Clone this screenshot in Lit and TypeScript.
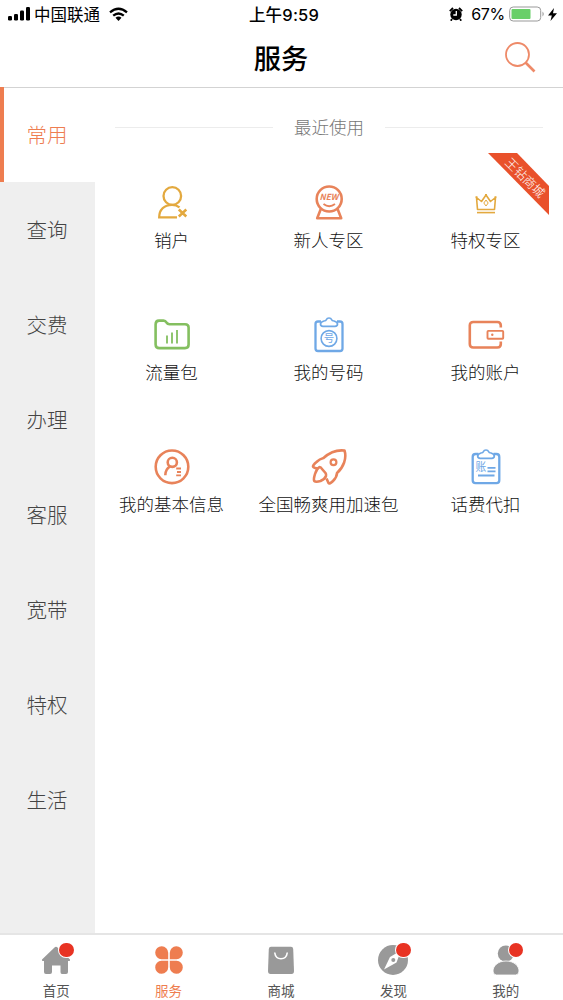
import { LitElement, html, css, svg } from "lit";
import { customElement, state } from "lit/decorators.js";

const O = "#e8835a", Y = "#e3a93f", G = "#84bf60", B = "#6fa8e6";

const icons: Record<string, any> = {
  cancel: svg`<g fill="none" stroke=${Y} stroke-width="2.300"><circle cx="20.300" cy="13" r="8.800"/><path d="M25 34.300H7.200C7.200 27 12 21.800 20 21.800Q24.500 21.800 27.500 24.300"/><path d="M26.800 26.500L34.300 33.500M34.300 26.500L26.800 33.500" stroke-width="2.500"/></g>`,
  newbie: svg`<g fill="none" stroke=${O} stroke-width="2.600" stroke-linejoin="round"><circle cx="20.200" cy="16" r="12.500"/><path d="M11.800 26L8.200 35.200H32.200L28.600 26"/><path d="M14.500 21Q20.200 25.500 26 21" stroke-width="1.800"/></g><text x="20" y="17" text-anchor="middle" font-size="8.300" font-weight="700" font-style="italic" fill=${O}>NEW</text>`,
  crown: svg`<g fill="none" stroke=${Y} stroke-width="1.600" stroke-linejoin="round"><path d="M11.500 26.500L10.500 14.500L15.500 18.500L20 12L24.500 18.500L29.500 14.500L28.500 26.500Z"/><path d="M20 17l2.200 3L20 23l-2.200-3z" stroke-width="1"/><path d="M11 29.600H29"/><path d="M19 11.800h2M9.500 14h2M28.500 14h2"/></g>`,
  folder: svg`<g fill="none" stroke=${G} stroke-width="2.600" stroke-linejoin="round"><path d="M3.600 9.500Q3.600 5.600 7 5.600H11.500Q13.500 5.600 14.500 7.500Q15.500 9.300 17.500 9.300H33Q36.600 9.300 36.600 12.500V29.500Q36.600 33.100 33 33.100H7.300Q3.600 33.100 3.600 29.500Z"/><path d="M15 20.500v8M20 17.500v11M25 15v13.500" stroke-width="1.800"/></g>`,
  number: svg`<g fill="none" stroke=${B} stroke-width="2.300" stroke-linejoin="round"><path d="M12 6.500H9Q6.500 6.500 6.500 9V33.500Q6.500 36 9 36H31Q33.500 36 33.500 33.500V9Q33.500 6.500 31 6.500H28"/><path d="M15 6Q17 6 17.500 4.500Q18 3 20 3T22.500 4.500Q23 6 25 6Q28.500 7 28.500 9Q28.500 11.300 26 11.300H14Q11.500 11.300 11.500 9Q11.500 7 15 6Z" stroke-width="1.700"/><circle cx="20" cy="23.500" r="7.900" stroke-width="1.600"/></g><text x="20" y="27.400" text-anchor="middle" font-size="10.500" font-weight="400" fill=${B}>号</text>`,
  wallet: svg`<g fill="none" stroke=${O} stroke-width="2.600"><path d="M34.800 12.500V10.500Q34.800 7 31.300 7H7.300Q3.800 7 3.800 10.500V29Q3.800 32.500 7.300 32.500H31.300Q34.800 32.500 34.800 29V26.500"/><rect x="21.500" y="15.900" width="15.700" height="7.900" rx=".8" stroke-width="1.900"/></g><circle cx="26.300" cy="19.800" r="1.200" fill=${O}/>`,
  info: svg`<g fill="none" stroke=${O} stroke-width="2.600"><circle cx="20" cy="19.800" r="16.300"/><circle cx="20.300" cy="15.300" r="4.600"/><path d="M13.300 28.300Q13.300 22.300 18 19.300"/><path d="M24.200 21.500H29M25 25H29M24.200 28.300H29" stroke-width="1.800"/></g>`,
  rocket: svg`<g fill="none" stroke=${O} stroke-width="2.600" stroke-linejoin="round"><path d="M9 21.500Q4.500 21 4 19.500Q4 18 7.500 15C10 12.500 12.500 11.500 14.500 11C20 6 27 2.500 35.500 3.500C38 11 34.500 20.500 28 26Q28 30 24 34Q20.500 37.500 19.500 36L17.500 31.500"/><path d="M10.500 20Q7.500 22 6 27Q4.300 32.500 5.300 34Q6.800 35.500 11.500 34Q16 32 17 29Q17.500 27.500 16.500 26L13 22Q12 20 10.500 20Z"/><circle cx="24.500" cy="15.200" r="2.900" stroke-width="2.200"/></g>`,
  bill: svg`<g fill="none" stroke=${B} stroke-width="2.300" stroke-linejoin="round"><path d="M12.500 7H9.500Q6.700 7 6.700 10V33.300Q6.700 36.200 9.500 36.200H30.500Q33.300 36.200 33.300 33.300V10Q33.300 7 30.500 7H27.500"/><path d="M15 6Q17 6 17.500 4.500Q18 3 20 3T22.500 4.500Q23 6 25 6Q28.300 7 28.300 9Q28.300 11.300 25.800 11.300H14.200Q11.700 11.300 11.700 9Q11.700 7 15 6Z" stroke-width="1.700"/><path d="M21.500 20.800h8M21.500 24.300h8M12 28.500h16.500" stroke-width="1.800"/></g><text x="9.600" y="24" font-size="10.800" font-weight="400" fill=${B}>账</text>`,
  home: svg`<path fill="#999" d="M2 16.500L14.500 4.500Q16 3.200 17.500 4.500L30 16.500Q30.500 18 29 18H28V29Q28 31 26 31H22Q20.500 31 20.500 29V22.500H12V29Q12 31 10 31H6Q4 31 4 29V18H3Q1.500 18 2 16.500Z"/>`,
  services: svg`<g fill="#ee7d50"><path d="M15.200 16.200H8.500A6.500 6.500 0 1 1 15.200 9.700Z"/><path d="M16.800 16.200H23.500A6.500 6.500 0 1 0 16.800 9.700Z"/><path d="M15.200 17.800H8.500A6.500 6.500 0 1 0 15.200 24.300Z"/><path d="M16.800 17.800H23.500A6.500 6.500 0 1 1 16.800 24.300Z"/></g>`,
  shop: svg`<path fill="#999" d="M6 3.800H26Q28 3.800 28.200 6L29 28Q29 31 26.500 31H5.500Q3 31 3 28L3.800 6Q4 3.800 6 3.800Z"/><path d="M9.700 9.500Q10.500 15.700 16 15.700T22.300 9.500" stroke="#fff" stroke-width="1.600" fill="none"/>`,
  discover: svg`<circle cx="16" cy="17" r="15" fill="#999"/><path fill="#fff" d="M7 26.500L13 14L24 7.500L19.500 19.500Z"/><circle cx="16.300" cy="17" r="2" fill="#999"/>`,
  mine: svg`<circle cx="15.800" cy="10.500" r="8" fill="#999"/><path fill="#999" stroke="#fff" stroke-width=".8" d="M16 18C24 18 29 23 29 28Q29 32 25.500 32H6.500Q3 32 3 28C3 23 8 18 16 18Z"/>`,
};

@customElement("app-root")
export class AppRoot extends LitElement {
  @state() private active = "常用";

  static styles = css`
    :host { display: flex; flex-direction: column; width: 563px; height: 1000px; overflow: hidden; background: #fff; color: #000; font-family: "Noto Sans CJK SC", sans-serif; }
    * { box-sizing: border-box; }
    .status { display: grid; grid-template-columns: 1fr auto 1fr; height: 28px; padding: 0 6px 0 8px; align-items: center; font: 16px/28px Inter, "Noto Sans CJK SC", sans-serif; }
    .cluster { display: flex; align-items: center; }
    .carrier { margin: 0 9px 0 4px; padding-top: 1px; height: 28px; font-size: 16.500px; }
    .time { font-weight: 500; font-size: 16.500px; letter-spacing: .2px; padding: 1px 0 0 3px; height: 28px; }
    .right { justify-content: flex-end; }
    .percent { margin: 0 4px 0 8px; letter-spacing: -.3px; }
    .bolt { margin-left: 3px; }
    header { height: 59px; display: grid; grid-template-columns: 1fr auto 1fr; align-items: center; }
    h1 { grid-column: 2; margin: 0 1px 1px 0; font-size: 27.300px; line-height: 40px; font-weight: 500; }
    .search { justify-self: end; margin: 0 26px 2px 0; display: block; }
    main { height: 846px; display: flex; }
    nav { flex: none; width: 95px; background: #efefef; }
    .category { height: 95.100px; display: flex; align-items: center; justify-content: center; border-left: 4px solid transparent; padding: 0 5px 2px 0; font-size: 20.500px; font-weight: 300; color: #444; }
    .selected { background: #fff; color: #ee7d50; border-left-color: #ee7d50; }
    .category:first-child { box-shadow: inset 0 1px #d3d3d3; }
    section { flex: 1; border-top: 1px solid #d3d3d3; }
    .recent { height: 78px; padding: 0 21px 0 20px; display: flex; align-items: center; gap: 21px; color: #777; font-size: 17.500px; font-weight: 300; }
    .recent span { padding-bottom: 2px; }
    .recent::before, .recent::after { content: ""; flex: 1; height: 1px; background: #ececec; }
    .grid { display: grid; grid-template-columns: repeat(3, 157px); grid-auto-rows: 132px; margin-left: -2px; }
    .service { position: relative; display: flex; flex-direction: column; align-items: center; padding-top: 17px; font-size: 17.500px; line-height: 26px; font-weight: 300; color: #111; white-space: nowrap; }
    .service svg { margin-bottom: 4px; }
    .ribbon { position: absolute; right: 14px; top: -13px; width: 62px; height: 62px; }
    footer { height: 67px; display: grid; grid-template-columns: repeat(5, 1fr); border-top: 2px solid #e5e5e5; padding-right: 1px; }
    .tab { display: flex; flex-direction: column; align-items: center; padding-top: 8px; font-size: 13.500px; line-height: 20px; color: #555; }
    .current { color: #ee7d50; }
    .picture { position: relative; height: 37px; }
    .dot { position: absolute; top: -.5px; right: -1.500px; width: 14.500px; height: 14.500px; border-radius: 50%; background: #e83323; box-shadow: 0 0 0 1px #fff; }
    svg { display: block; font-family: "Noto Sans CJK SC", sans-serif; }
  `;

  render() {
    const services = [["cancel", "销户"], ["newbie", "新人专区"], ["crown", "特权专区"], ["folder", "流量包"], ["number", "我的号码"], ["wallet", "我的账户"], ["info", "我的基本信息"], ["rocket", "全国畅爽用加速包"], ["bill", "话费代扣"]];
    const tabs: [string, string, boolean][] = [["home", "首页", true], ["services", "服务", false], ["shop", "商城", false], ["discover", "发现", true], ["mine", "我的", true]];
    return html`
      <div class="status">
        <div class="cluster">
          <svg width="22" height="14" viewBox="0 0 22 14"><rect y="9" width="4" height="4.500" rx="1.200"/><rect x="6" y="7" width="4" height="6.500" rx="1.200"/><rect x="12" y="3.500" width="4" height="10" rx="1.200"/><rect x="18" width="4" height="13.500" rx="1.200"/></svg>
          <span class="carrier">中国联通</span>
          <svg width="19" height="15" viewBox="0 0 19 15"><g fill="none" stroke="#000" stroke-width="2.300"><path d="M1 5.300Q9.500-1.800 18 5.300"/><path d="M4.200 8.700Q9.500 4.200 14.800 8.700"/></g><path d="M6.500 10.700Q9.500 8.500 12.500 10.700L9.500 14Z"/></svg>
        </div>
        <span class="time">上午9:59</span>
        <div class="cluster right">
          <svg width="14" height="14" viewBox="0 0 14 14"><circle cx="7" cy="7.500" r="5.700"/><path d="M.8 4.200L4 1M13.200 4.200L10 1M3 12l-1.200 1.700M11 12l1.200 1.700" stroke="#000" stroke-width="1.800"/><path d="M7.300 4v4H4.300" fill="none" stroke="#fff" stroke-width="1.300"/></svg>
          <span class="percent">67%</span>
          <svg width="36" height="16" viewBox="0 0 36 16"><rect x=".7" y="1" width="31" height="14" rx="3.500" fill="#fff" stroke="#999"/><rect x="2.500" y="3" width="19" height="10" rx="1" fill="#69cf69"/><path d="M33.500 5.500Q36 8 33.500 10.500Z" fill="#999"/></svg>
          <svg class="bolt" width="9" height="13" viewBox="0 0 9 13"><path d="M6 0L0 7.500H3.800L2.500 13L9 5.200H5Z"/></svg>
        </div>
      </div>
      <header><h1>服务</h1><svg class="search" width="34" height="34" viewBox="0 0 34 34" fill="none" stroke="#ee8a68"><circle cx="14.500" cy="14.500" r="11.500" stroke-width="1.800"/><path d="M22.500 22.500L31.500 31.500" stroke-width="2.600"/></svg></header>
      <main>
        <nav>${["常用", "查询", "交费", "办理", "客服", "宽带", "特权", "生活"].map((name) => html`<div class="category ${this.active === name ? "selected" : ""}" @click=${() => (this.active = name)}>${name}</div>`)}</nav>
        <section>
          <div class="recent"><span>最近使用</span></div>
          <div class="grid">${services.map(([key, label]) => html`<div class="service"><svg width="40" height="40" viewBox="0 0 40 40">${icons[key]}</svg><span>${label}</span>${key === "crown" ? html`<svg class="ribbon" viewBox="0 0 62 62"><path fill="#e9512b" d="M0 0H29L61 33V62Z"/><text transform="translate(37.500 24.500) rotate(45)" x="0" y="5" text-anchor="middle" font-size="12.500" font-weight="300" fill="#fff">王钻商城</text></svg>` : ""}</div>`)}</div>
        </section>
      </main>
      <footer>${tabs.map(([key, label, dot]) => html`<div class="tab ${key === "services" ? "current" : ""}"><div class="picture"><svg width="32" height="33" viewBox="0 0 32 33">${icons[key]}</svg>${dot ? html`<i class="dot"></i>` : ""}</div><span>${label}</span></div>`)}</footer>
    `;
  }
}
